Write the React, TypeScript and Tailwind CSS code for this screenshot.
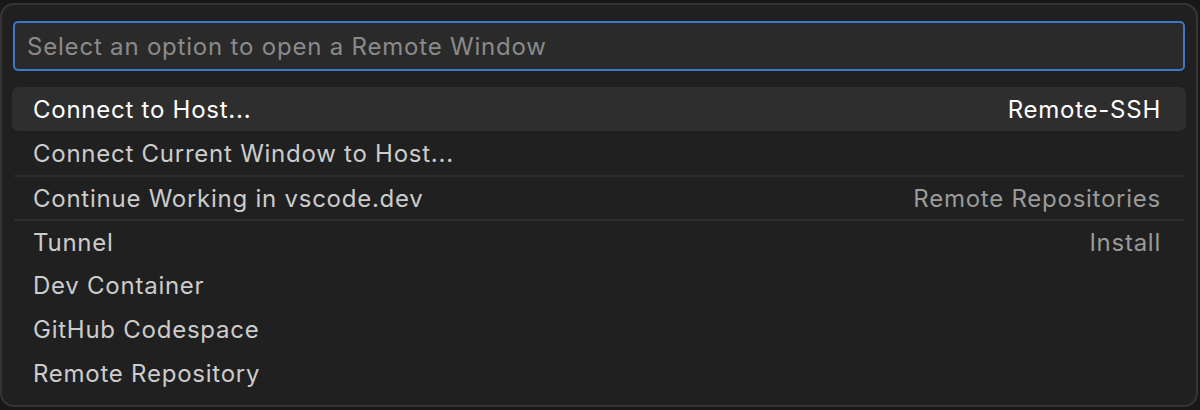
export default function App() {
  const items = [
    { label: "Connect to Host...", detail: "Remote-SSH", active: true, sep: false },
    { label: "Connect Current Window to Host...", detail: "", active: false, sep: false },
    { label: "Continue Working in vscode.dev", detail: "Remote Repositories", active: false, sep: true },
    { label: "Tunnel", detail: "Install", active: false, sep: true },
    { label: "Dev Container", detail: "", active: false, sep: false },
    { label: "GitHub Codespace", detail: "", active: false, sep: false },
    { label: "Remote Repository", detail: "", active: false, sep: false },
  ];

  return (
    <div
      className="w-[1200px] h-[410px] bg-[#181818] pt-[3px] overflow-hidden"
      style={{ fontFamily: "Inter, 'Noto Sans', sans-serif" }}
    >
      <div className="w-[1198px] h-[404px] bg-[#202020] border-2 border-[#353535] rounded-[14px] px-[10px] pt-[16px]">
        {/* Input */}
        <div className="mx-[1px] h-[50px] bg-[#2a2a2a] border-2 border-[#3b78c6] rounded-[5px] flex items-center pl-[12px] pr-[13px] pt-[1px]">
          <input
            className="w-full bg-transparent text-[24px] tracking-[0.8px] text-white placeholder-[#8a8a8a] outline-none"
            placeholder="Select an option to open a Remote Window"
          />
        </div>

        {/* List */}
        <div className="mt-[16px]">
          {items.map((item) => (
            <div key={item.label}>
              {item.sep && <div className="mx-[2px] h-[2px] bg-[#2c2c2c]" />}
              <div
                className={
                  "flex items-center justify-between pl-[21px] pr-[25px] pt-[2px] text-[24px] tracking-[0.75px] rounded-[7px] " +
                  (item.sep ? "h-[42px] " : "h-[44px] ") +
                  (item.active ? "bg-[#2e2e2e] text-white" : "text-[#cccccc]")
                }
              >
                <span>{item.label}</span>
                {item.detail && (
                  <span className={item.active ? "text-white" : "text-[#9a9a9a]"}>{item.detail}</span>
                )}
              </div>
            </div>
          ))}
        </div>
      </div>
    </div>
  );
}
